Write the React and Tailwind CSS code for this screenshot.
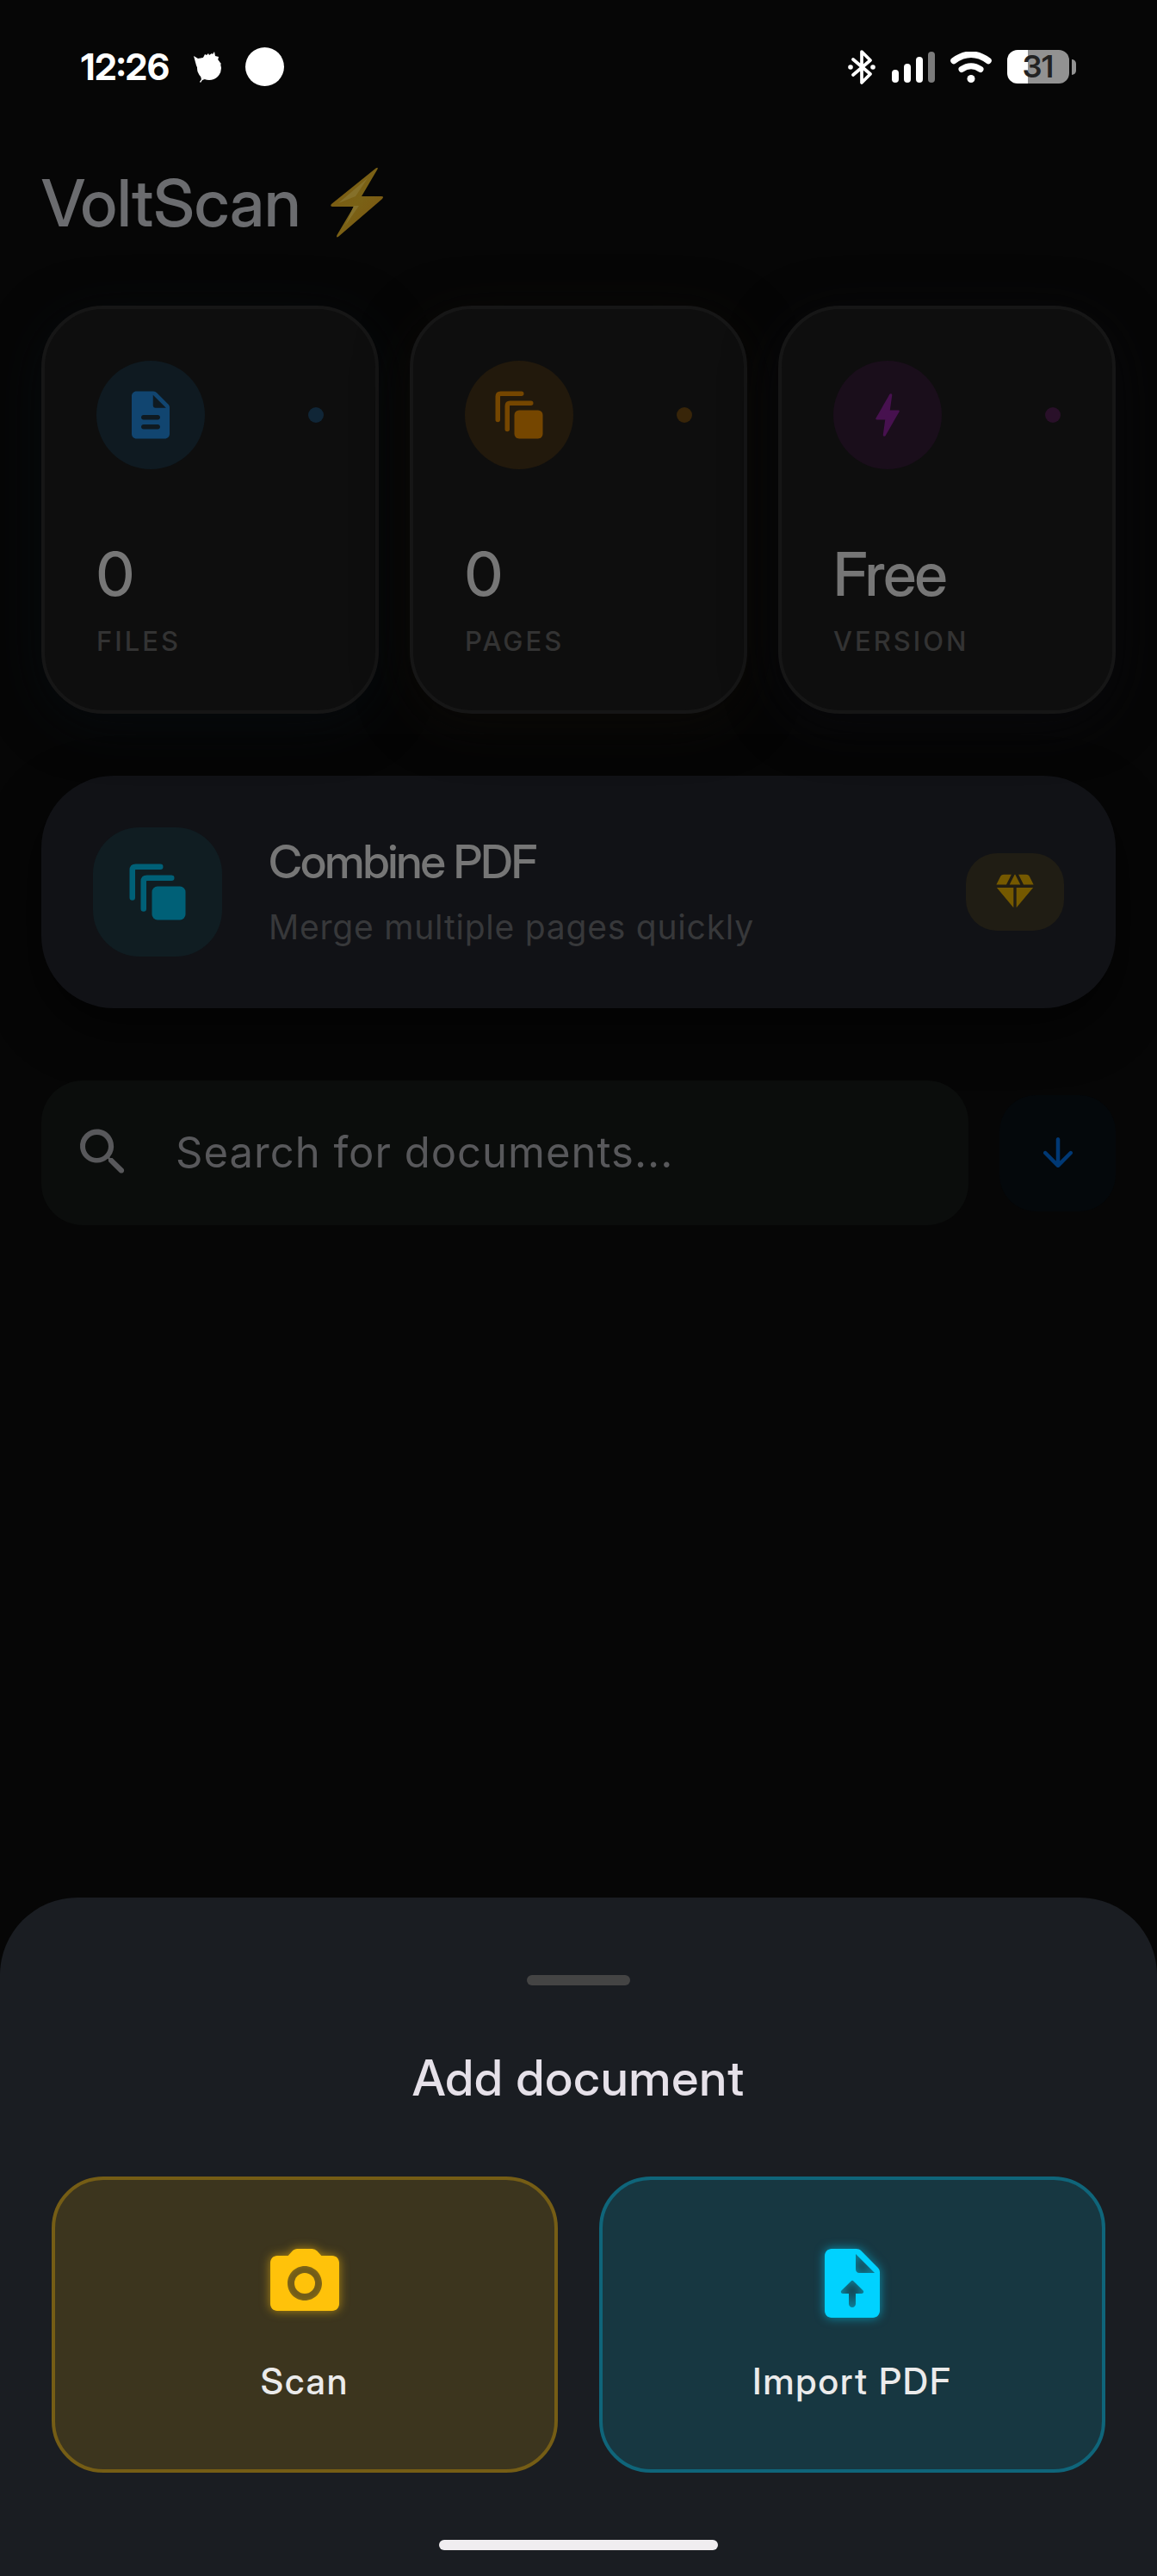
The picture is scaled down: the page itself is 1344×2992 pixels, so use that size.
import React, { useState } from 'react';

const FilesIcon = ({ className }) => (
  <svg className={className} viewBox="0 0 24 24" fill="currentColor" aria-hidden="true">
    <path d="M14.6 2.6A2 2 0 0 0 13.17 2H6c-1.100 0-2 .9-2 2v16c0 1.100.9 2 2 2h12c1.100 0 2-.9 2-2V8.830c0-.53-.21-1.040-.59-1.410L14.600 2.600zM15 18H9c-.55 0-1-.45-1-1s.45-1 1-1h6c.55 0 1 .45 1 1s-.45 1-1 1zm0-4H9c-.55 0-1-.45-1-1s.45-1 1-1h6c.55 0 1 .45 1 1s-.45 1-1 1zm-2-6V3.500L18.500 9H14c-.55 0-1-.45-1-1z" />
  </svg>
);

const StackIcon = ({ className }) => (
  <svg className={className} viewBox="0 0 24 24" fill="currentColor" aria-hidden="true">
    <rect x="10" y="10" width="12" height="12" rx="2" />
    <path d="M7 18V8.200Q7 7 8.200 7H17M3 14V4.200Q3 3 4.200 3H13" fill="none" stroke="currentColor" strokeWidth="2" strokeLinecap="round" />
  </svg>
);

const BoltIcon = ({ className }) => (
  <svg className={className} viewBox="0 0 24 24" fill="currentColor" aria-hidden="true">
    <path d="M10.670 21c-.35 0-.62-.31-.57-.66L11 14H7.500c-.88 0-.33-.75-.31-.78 1.260-2.230 3.150-5.530 5.650-9.930a.58.58 0 0 1 1.080.37l-.9 6.340h3.510c.4 0 .62.190.4.660-3.290 5.740-5.200 9.090-5.750 10.050-.1.180-.29.290-.51.290z" />
  </svg>
);

const DiamondIcon = ({ className }) => (
  <svg className={className} viewBox="0 0 24 24" fill="currentColor" aria-hidden="true">
    <path d="M12.160 3h-.32L9.210 8.250h5.580zm4.300 5.250h5.160l-2.070-4.140C19.210 3.430 18.520 3 17.760 3h-3.930zm4.920 1.500h-8.630V20.100zm-10.130 10.350V9.750H2.620zM7.540 8.250L10.160 3H6.240c-.76 0-1.450.43-1.790 1.110L2.380 8.250z" />
  </svg>
);

const SearchIcon = ({ className }) => (
  <svg className={className} viewBox="0 0 24 24" fill="currentColor" aria-hidden="true">
    <path d="M15.500 14h-.79l-.28-.27A6.470 6.470 0 0 0 15.910 8.200c-.47-2.780-2.790-5-5.590-5.340a6.505 6.505 0 0 0-7.270 7.270c.34 2.800 2.560 5.120 5.340 5.590a6.470 6.470 0 0 0 5.340-1.480l.27.28v.79l4.250 4.250c.41.41 1.080.41 1.490 0 .41-.41.41-1.080 0-1.490L15.500 14zm-6 0C7.010 14 5 11.990 5 9.500S7.010 5 9.500 5 14 7.010 14 9.500 11.990 14 9.500 14z" />
  </svg>
);

const ArrowDownIcon = ({ className }) => (
  <svg className={className} viewBox="0 0 24 24" fill="currentColor" aria-hidden="true">
    <path d="M11 5v11.170l-4.880-4.880c-.39-.39-1.030-.39-1.420 0-.39.39-.39 1.020 0 1.410l6.590 6.590c.39.39 1.020.39 1.410 0l6.590-6.590c.39-.39.39-1.020 0-1.410-.39-.39-1.020-.39-1.410 0L13 16.170V5c0-.55-.45-1-1-1s-1 .45-1 1z" />
  </svg>
);

const CameraIcon = ({ className }) => (
  <svg className={className} viewBox="0 0 24 24" fill="currentColor" aria-hidden="true">
    <circle cx="12" cy="12" r="3" />
    <path d="M20 4h-3.170l-1.240-1.350A1.990 1.990 0 0 0 14.120 2H9.880c-.56 0-1.100.24-1.480.65L7.170 4H4c-1.100 0-2 .9-2 2v12c0 1.100.9 2 2 2h16c1.100 0 2-.9 2-2V6c0-1.100-.9-2-2-2zm-8 13c-2.760 0-5-2.240-5-5s2.240-5 5-5 5 2.240 5 5-2.240 5-5 5z" />
  </svg>
);

const UploadIcon = ({ className }) => (
  <svg className={className} viewBox="0 0 24 24" fill="currentColor" aria-hidden="true">
    <path d="M14.590 2.590c-.38-.38-.89-.59-1.420-.59H6c-1.100 0-2 .9-2 2v16c0 1.100.89 2 1.990 2H18c1.100 0 2-.9 2-2V8.830c0-.53-.21-1.040-.59-1.410l-4.820-4.830zM14.800 15H13v3c0 .55-.45 1-1 1s-1-.45-1-1v-3H9.210c-.45 0-.67-.54-.35-.85l2.800-2.790c.2-.19.51-.19.710 0l2.790 2.790c.3.310.08.850-.36.850zM14 9c-.55 0-1-.45-1-1V3.500L18.500 9H14z" />
  </svg>
);

const LightningEmoji = ({ className }) => (
  <svg className={className} viewBox="0 0 62 82" role="img" aria-label="lightning">
    <defs>
      <linearGradient id="bolt" x1="0" y1="0" x2="1" y2="1">
        <stop offset="0" stopColor="#7c570f" />
        <stop offset="0.5" stopColor="#7a6216" />
        <stop offset="1" stopColor="#7c520e" />
      </linearGradient>
    </defs>
    <path d="M52.500 1.500Q55.500-.5 54.500 2.500L36 34h23q3.500 0 1 3L9.500 80.500Q6 83 7.500 79L27 46H2q-3-.5-1-3z" fill="url(#bolt)" />
    <path d="M43 13 29 34 9 42zM33 45 17 68l10-23z" fill="#85702a" />
  </svg>
);

const stats = [
  {
    label: 'FILES',
    value: '0',
    Icon: FilesIcon,
    circle: 'bg-[#0f1a21] text-[#114570]',
    dot: 'bg-[#102637]',
    glow: 'shadow-[0_12px_60px_#060a0d]',
  },
  {
    label: 'PAGES',
    value: '0',
    Icon: StackIcon,
    circle: 'bg-[#22190c] text-[#754600]',
    dot: 'bg-[#382509]',
    glow: 'shadow-[0_12px_60px_#0b0906]',
  },
  {
    label: 'VERSION',
    value: 'Free',
    Icon: BoltIcon,
    circle: 'bg-[#1a0e1b] text-[#47114f]',
    dot: 'bg-[#291029]',
    glow: 'shadow-[0_12px_60px_#08080b]',
  },
];

const StatusBar = () => (
  <div className="flex items-center justify-between h-[155px] px-[94px] text-white">
    <div className="flex items-center">
      <span className="text-[42px] leading-[48px] font-bold">12:26</span>
      <svg className="w-8 h-9 ml-7" viewBox="0 0 32 36" fill="currentColor" aria-hidden="true">
        <circle cx="18" cy="19" r="14" />
        <path d="M0 5l5 3 6-1 2-4 2 1 2-2 1 2 3-2 1 1 2-3 1 5 4 1-1 4 4 4-10 8-15 3-4-9zM8 29l5 3-3 1-2 3-1-1 2-3z" />
      </svg>
      <span className="w-[45px] h-[45px] ml-7 rounded-full bg-white" />
    </div>

    <div className="flex items-center">
      <svg className="w-8 h-10" viewBox="0 0 32 40" aria-hidden="true">
        <path d="M6 11l20 17-10 10V2l10 10L6 29" fill="none" stroke="currentColor" strokeWidth="3.700" strokeLinecap="round" strokeLinejoin="round" />
        <circle cx="3" cy="20" r="2.800" fill="currentColor" />
        <circle cx="29" cy="20" r="2.800" fill="currentColor" />
      </svg>
      <div className="flex items-end gap-[6px] h-9 ml-[19px]">
        <span className="w-2 h-[15px] rounded-full bg-white" />
        <span className="w-2 h-[22px] rounded-full bg-white" />
        <span className="w-2 h-[30px] rounded-full bg-white" />
        <span className="w-2 h-9 rounded-full bg-[#7b7b7b]" />
      </div>
      <svg className="w-12 h-9 ml-[18px]" viewBox="0 0 48 36" aria-hidden="true">
        <path d="M4 10.500Q24-4 44 10.500" fill="none" stroke="currentColor" strokeWidth="7.500" strokeLinecap="round" />
        <path d="M13 20.500Q24 13 35 20.500" fill="none" stroke="currentColor" strokeWidth="7" strokeLinecap="round" />
        <circle cx="24" cy="31.500" r="4.500" fill="currentColor" />
      </svg>
      <div className="flex items-center justify-center w-[72px] h-[39px] ml-[18px] rounded-xl bg-linear-to-r from-white from-33% to-[#929292] to-33%">
        <span className="text-[36px] leading-[39px] font-semibold text-[#222222]">31</span>
      </div>
      <span className="w-[5px] h-[18px] ml-[3px] rounded-r-full bg-[#929292]" />
    </div>
  </div>
);

const StatCard = ({ label, value, Icon, circle, dot, glow }) => (
  <div className={`flex-1 p-[60px] border-4 border-[#161616] bg-[#0e0e0e] rounded-[72px] ${glow}`}>
    <div className="flex items-center justify-between">
      <div className={`flex items-center justify-center w-[126px] h-[126px] rounded-full ${circle}`}>
        <Icon className="w-[66px] h-[66px]" />
      </div>
      <span className={`w-[18px] h-[18px] rounded-full ${dot}`} />
    </div>
    <p className="mt-[86px] text-[70px] leading-[72px] font-medium tracking-tight text-[#767676]">{value}</p>
    <p className="mt-6 mb-[2px] text-[31px] leading-9 font-['Inter',sans-serif] font-medium tracking-[3px] text-[#333333]">{label}</p>
  </div>
);

const AddButton = ({ label, Icon, color, iconColor }) => (
  <button type="button" className={`flex-1 flex flex-col items-center gap-10 pt-[72px] pb-[76px] border-4 rounded-[60px] ${color}`}>
    <Icon className={`w-24 h-24 ${iconColor}`} />
    <span className="text-[42px] leading-[52px] font-medium tracking-[2px] text-[#ebebeb]">{label}</span>
  </button>
);

const AddSheet = () => (
  <section
    role="dialog"
    aria-labelledby="add-title"
    className="flex flex-col items-center px-[60px] pt-[90px] pb-[30px] bg-[#1a1d22] rounded-t-[90px]"
  >
    <span className="w-[120px] h-3 rounded-full bg-[#444444]" />
    <h2 id="add-title" className="mt-[72px] text-[57px] leading-[72px] font-medium tracking-[1px] text-[#e6e1e9]">
      Add document
    </h2>
    <div className="flex gap-12 w-full mt-[78px]">
      <AddButton
        label="Scan"
        Icon={CameraIcon}
        color="bg-[#3c351e] border-[#755d15]"
        iconColor="text-[#ffc20a] drop-shadow-[0_0_6px_#ffc20a99]"
      />
      <AddButton
        label="Import PDF"
        Icon={UploadIcon}
        color="bg-[#173741] border-[#0f657a]"
        iconColor="text-[#00d2ff] drop-shadow-[0_0_6px_#00d2ff99]"
      />
    </div>
    <span className="w-[324px] h-3 mt-[78px] rounded-full bg-[#f0edf0]" />
  </section>
);

export default function App() {
  const [query, setQuery] = useState('');

  return (
    <div className="min-h-screen flex flex-col bg-[#060606] font-['Inter_Display','Inter',sans-serif]">
      <StatusBar />

      <main className="flex-1 px-12">
        <h1 className="flex items-center gap-[34px] h-40 text-[76px] leading-[90px] font-medium text-[#6b6c6f]">
          VoltScan
          <LightningEmoji className="w-[62px] h-[82px]" />
        </h1>

        <div className="flex gap-9 mt-10">
          {stats.map((stat) => (
            <StatCard key={stat.label} {...stat} />
          ))}
        </div>

        {/* Combine PDF */}
        <button
          type="button"
          className="flex items-center w-full mt-[72px] p-[60px] bg-[#111216] rounded-[84px] text-left shadow-[0_24px_60px_#00000099]"
        >
          <span className="flex items-center justify-center w-[150px] h-[150px] rounded-[54px] bg-[#101d22] text-[#006077]">
            <StackIcon className="w-[78px] h-[78px]" />
          </span>
          <span className="flex-1 ml-[54px]">
            <span className="block text-[54px] leading-[66px] font-medium tracking-[-2px] text-[#767676]">Combine PDF</span>
            <span className="block mt-4 text-[39px] leading-[54px] font-['Inter',sans-serif] tracking-[0.02em] text-[#37383a]">
              Merge multiple pages quickly
            </span>
          </span>
          <span className="flex items-center justify-center w-[114px] h-[90px] rounded-[36px] bg-[#201d14] text-[#755900]">
            <DiamondIcon className="w-[54px] h-[54px]" />
          </span>
        </button>

        <div className="flex items-center gap-9 mt-[84px]">
          <label className="flex-1 flex items-center gap-12 h-[168px] px-9 rounded-[48px] bg-[#0b0d0c] text-[#58585b]">
            <SearchIcon className="w-[72px] h-[72px]" />
            <input
              type="text"
              value={query}
              onChange={(e) => setQuery(e.target.value)}
              placeholder="Search for documents..."
              aria-label="Search for documents"
              className="flex-1 h-[72px] text-[49px] font-['Inter',sans-serif] tracking-[1px] bg-transparent outline-none placeholder-[#58585b]"
            />
          </label>
          <button
            type="button"
            aria-label="Sort"
            className="flex items-center justify-center w-[135px] h-[135px] rounded-[42px] bg-[#04080b] text-[#003874]"
          >
            <ArrowDownIcon className="w-[54px] h-[54px]" />
          </button>
        </div>
      </main>

      <AddSheet />
    </div>
  );
}
